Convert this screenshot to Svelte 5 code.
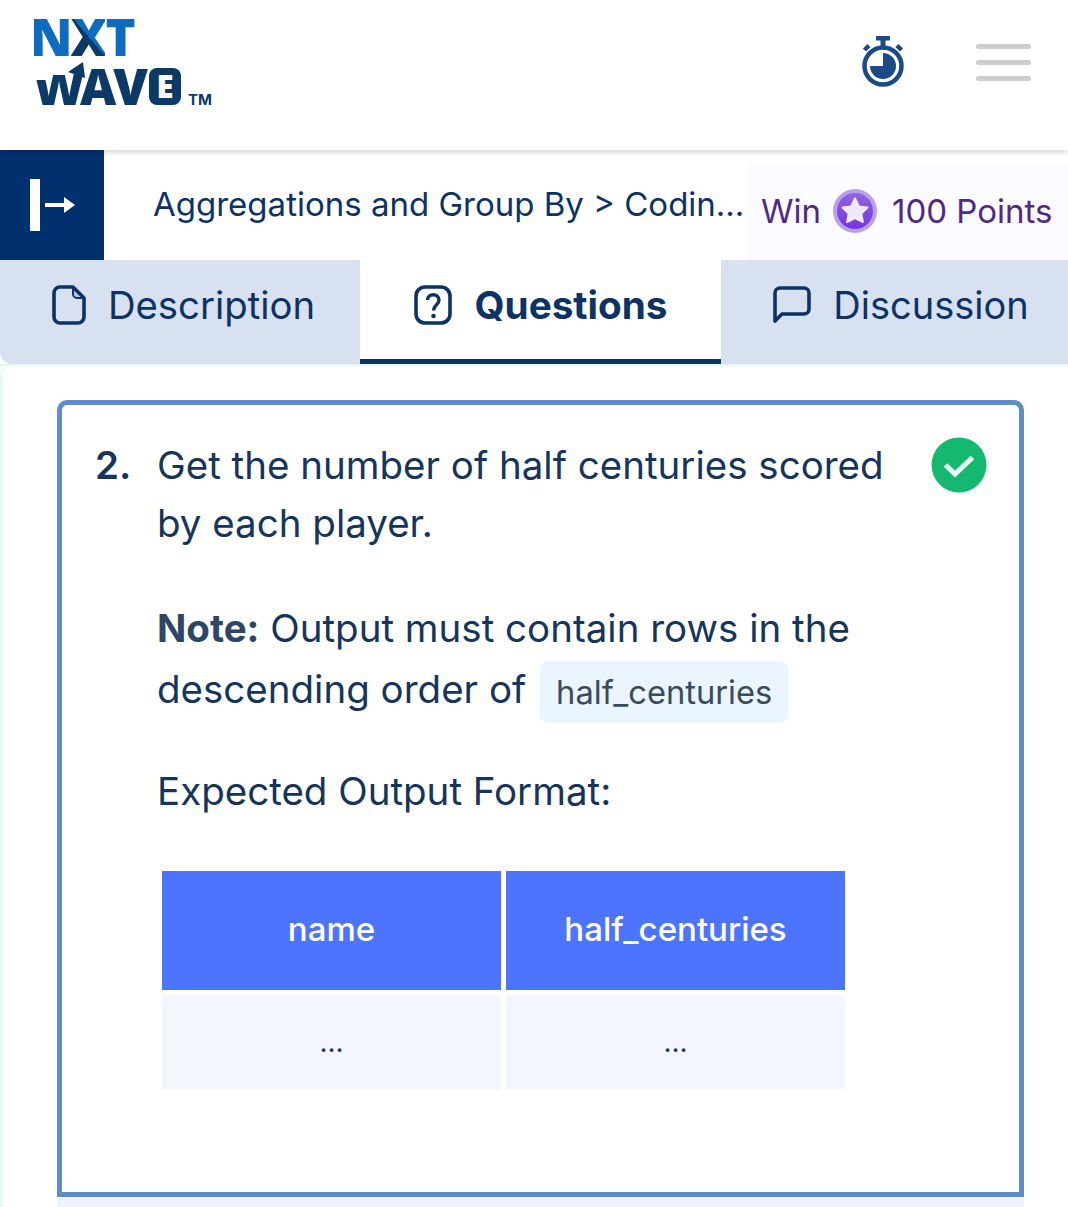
<script lang="ts">
  const columns = ["name", "half_centuries"];
</script>

<div class="page">
  <header class="topbar">
    <div class="logo">
      <div class="logo-nxt"><span>N</span><span class="x">X</span><span>T</span></div>
      <div class="logo-wave">
        <span class="w">W</span><span>AV</span><span class="e">E</span><span class="tm">TM</span>
        <svg class="wave-arrow" viewBox="0 0 62 50" aria-hidden="true">
          <rect x="0" y="4" width="21" height="14" fill="#fff" />
          <rect x="21" y="4" width="16" height="9" fill="#fff" />
          <path d="M37 10 L52 0 L54 16 Z" fill="#0c3a66" />
        </svg>
      </div>
    </div>
    <div class="top-actions">
      <svg class="timer" viewBox="0 0 44 52" aria-hidden="true">
        <rect x="15" y="0" width="14" height="4.5" fill="#1b4a87" />
        <rect x="19.500" y="3" width="5" height="7" fill="#1b4a87" />
        <path d="M3.500 14 L8 9.500 M40.500 14 L36 9.500" stroke="#1b4a87" stroke-width="4.500" />
        <circle cx="22" cy="30" r="18.500" fill="none" stroke="#1b4a87" stroke-width="4.500" />
        <path d="M22 17 A13 13 0 1 1 9 30 L22 30 Z" fill="#1b4a87" />
      </svg>
      <div class="burger"><i></i><i></i><i></i></div>
    </div>
  </header>

  <div class="crumb-row">
    <button class="toggle" aria-label="Open sidebar">
      <svg viewBox="0 0 46 54" width="46" height="54" aria-hidden="true">
        <rect x="0" y="1" width="10" height="52" fill="#fff" />
        <rect x="15" y="25" width="21" height="4" fill="#fff" />
        <path d="M34 19 L45 27 L34 35 Z" fill="#fff" />
      </svg>
    </button>
    <div class="crumb">Aggregations and Group By &gt; Coding Practice</div>
    <div class="win">
      <span>Win</span>
      <svg class="medal" viewBox="0 0 44 44" aria-hidden="true">
        <defs>
          <linearGradient id="medal-fill" x1="0" y1="0" x2="0" y2="1">
            <stop offset="0" stop-color="#8f66dc" />
            <stop offset="1" stop-color="#7433e6" />
          </linearGradient>
        </defs>
        <circle cx="22" cy="22" r="22" fill="#b9a0ea" />
        <circle cx="22" cy="22" r="18" fill="url(#medal-fill)" />
        <path d="M22 9.500 L26 17.500 L34.500 18.600 L28.300 24.600 L29.900 33 L22 29 L14.100 33 L15.700 24.600 L9.500 18.600 L18 17.500 Z" fill="#efe9fb" stroke="#efe9fb" stroke-width="2" stroke-linejoin="round" />
      </svg>
      <span>100 Points</span>
    </div>
  </div>

  <nav class="tabs">
    <div class="tab first">
      <svg viewBox="0 0 34 40" width="34" height="40" aria-hidden="true">
        <path d="M8 2 H21 L32 13 V32 A6 6 0 0 1 26 38 H8 A6 6 0 0 1 2 32 V8 A6 6 0 0 1 8 2 Z" fill="none" stroke="#0b3366" stroke-width="3.600" stroke-linejoin="round" />
        <path d="M21 3 L31 13 H25 A4 4 0 0 1 21 9 Z" fill="#b9c8df" stroke="#0b3366" stroke-width="2" stroke-linejoin="round" />
      </svg>
      <span>Description</span>
    </div>
    <div class="tab active">
      <svg viewBox="0 0 38 40" width="38" height="40" aria-hidden="true">
        <rect x="2" y="2" width="34" height="36" rx="9" fill="none" stroke="#0b3366" stroke-width="3.600" />
        <path d="M13.500 15 C13.500 8 25 8 25 15 C25 20 19.500 20 19.500 25.500" fill="none" stroke="#0b3366" stroke-width="3.400" />
        <circle cx="19.500" cy="31" r="2.300" fill="#0b3366" />
      </svg>
      <span>Questions</span>
    </div>
    <div class="tab last">
      <svg viewBox="0 0 38 38" width="38" height="38" aria-hidden="true">
        <path d="M2 35 V7 A5 5 0 0 1 7 2 H31 A5 5 0 0 1 36 7 V23 A5 5 0 0 1 31 28 H9 Z" fill="none" stroke="#0b3366" stroke-width="3.600" stroke-linejoin="round" />
      </svg>
      <span>Discussion</span>
    </div>
  </nav>

  <main class="content">
    <section class="card">
      <div class="question">
        <div class="number">2.</div>
        <div class="body">
          <p class="title">Get the number of half centuries scored by each player.</p>
          <p class="note"><strong>Note:</strong> Output must contain rows in the descending order of <code>half_centuries</code></p>
          <p class="format">Expected Output Format:</p>
          <table>
            <thead>
              <tr>
                {#each columns as column}
                  <th>{column}</th>
                {/each}
              </tr>
            </thead>
            <tbody>
              <tr>
                {#each columns as column}
                  <td>...</td>
                {/each}
              </tr>
            </tbody>
          </table>
        </div>
        <svg class="check" viewBox="0 0 56 56" aria-hidden="true">
          <circle cx="28" cy="28" r="27.500" fill="#14b86f" />
          <path d="M14.500 28 L24 37 L41.500 20.500" fill="none" stroke="#eafff6" stroke-width="5" />
        </svg>
      </div>
    </section>
    <div class="card-foot"></div>
  </main>
</div>

<style>
  :global(body) {
    margin: 0;
    background: #fff;
  }

  .page {
    width: 1068px;
    height: 1207px;
    overflow: hidden;
    font-family: Inter, "Liberation Sans", sans-serif;
    color: #0b3366;
  }

  .topbar {
    position: relative;
    z-index: 1;
    box-sizing: border-box;
    height: 150px;
    display: flex;
    justify-content: space-between;
    align-items: flex-start;
    padding: 16px 37px 0 33px;
    background: #fff;
    box-shadow: 0 3px 4px rgba(0, 0, 0, 0.13);
  }

  .logo {
    font-family: "Open Sans", Inter, sans-serif;
    font-weight: 800;
    line-height: 1;
  }

  .logo-nxt {
    display: flex;
    height: 40px;
    margin-left: -3px;
    font-size: 51px;
    line-height: 40px;
    letter-spacing: -2px;
    color: #0e6cc0;
  }

  .logo-nxt .x {
    background: linear-gradient(to top right, #0c3a66 50%, #0e6cc0 50%);
    -webkit-background-clip: text;
    background-clip: text;
    color: transparent;
  }

  .logo-wave {
    position: relative;
    display: flex;
    align-items: center;
    height: 40px;
    margin-top: 10px;
    margin-left: -2px;
    font-size: 50px;
    line-height: 40px;
    letter-spacing: -3px;
    color: #0c3a66;
  }

  .logo-wave .w {
    margin-left: 2px;
    letter-spacing: -5px;
  }

  .logo-wave .e {
    display: flex;
    align-items: center;
    justify-content: center;
    width: 32px;
    height: 37px;
    margin-left: 4px;
    border-radius: 8px;
    background: #0c3a66;
    color: #fff;
    font-size: 31px;
    letter-spacing: 0;
  }

  .logo-wave .tm {
    align-self: flex-end;
    margin-left: 7px;
    font-family: Inter, sans-serif;
    font-size: 15px;
    font-weight: 700;
    line-height: 15px;
    letter-spacing: 0;
    transform: translateY(1px);
  }

  .wave-arrow {
    position: absolute;
    left: 0;
    top: -4px;
    width: 62px;
    height: 50px;
  }

  .top-actions {
    display: flex;
    align-items: center;
    gap: 71px;
    padding-top: 20px;
  }

  .timer {
    width: 44px;
    height: 52px;
  }

  .burger {
    display: flex;
    flex-direction: column;
    gap: 11px;
    width: 55px;
  }

  .burger i {
    display: block;
    height: 5px;
    border-radius: 3px;
    background: #cdcdcd;
  }

  .crumb-row {
    display: flex;
    height: 110px;
  }

  .toggle {
    flex: none;
    width: 104px;
    height: 110px;
    display: flex;
    align-items: center;
    padding: 0 0 0 30px;
    border: 0;
    background: #00306e;
  }

  .crumb {
    flex: none;
    box-sizing: border-box;
    width: 643px;
    padding: 35px 0 0 49px;
    font-size: 33px;
    line-height: 38px;
    white-space: nowrap;
    overflow: hidden;
    text-overflow: ellipsis;
  }

  .win {
    flex: 1;
    display: flex;
    align-items: center;
    gap: 14px;
    margin-top: 14px;
    padding: 0 0 2px 14px;
    background: #fbfbff;
    color: #4f2a85;
    font-size: 33px;
  }

  .medal {
    flex: none;
    width: 44px;
    height: 44px;
    margin: 0 1px 0 -2px;
  }

  .tabs {
    display: grid;
    grid-template-columns: 360px 361px 347px;
    height: 104px;
    border-bottom: 2px solid #e3f6fb;
  }

  .tab {
    box-sizing: border-box;
    display: flex;
    align-items: center;
    justify-content: center;
    gap: 23px;
    padding-bottom: 14px;
    background: #d8e1ef;
    font-size: 38px;
  }

  .tab.first {
    padding-left: 7px;
    gap: 22px;
    font-size: 38.300px;
    border-bottom-left-radius: 12px;
  }

  .tab.active {
    background: #fff;
    border-bottom: 5px solid #0b3366;
    padding-bottom: 9px;
    font-size: 38.700px;
    font-weight: 700;
  }

  .tab.last {
    padding-left: 13px;
    gap: 22px;
  }

  .content {
    box-sizing: border-box;
    height: 841px;
    padding: 34px 44px 0 55px;
    border-left: 2px solid #e0f7fb;
    border-top-left-radius: 10px;
  }

  .card {
    box-sizing: border-box;
    height: 797px;
    padding: 31px 32px 0 33px;
    border: 5px solid #5f8cc4;
    border-radius: 10px 10px 0 0;
  }

  .card-foot {
    height: 10px;
    background: #eef3fd;
  }

  .question {
    display: flex;
    align-items: flex-start;
    color: #15355c;
    font-size: 38.500px;
  }

  .number {
    flex: none;
    width: 62px;
    font-weight: 600;
    line-height: 59px;
  }

  .body {
    flex: 1;
    min-width: 0;
  }

  .body p {
    margin: 0;
  }

  .title {
    width: 730px;
    line-height: 58px;
  }

  .note {
    width: 730px;
    margin-top: 46px !important;
    line-height: 61px;
  }

  .note strong {
    font-weight: 700;
    color: #2f4565;
  }

  .note code {
    display: inline-block;
    margin-top: 2px;
    margin-left: 3px;
    padding: 0 16px;
    border-radius: 8px;
    background: #eaf5fe;
    color: #3a4a5f;
    font-family: inherit;
    font-size: 32.700px;
    line-height: 62px;
    vertical-align: top;
  }

  .format {
    margin-top: 38px !important;
    line-height: 61px;
  }

  table {
    margin: 44px 0 0 0;
    border-collapse: separate;
    border-spacing: 5px;
  }

  th,
  td {
    width: 339px;
    padding: 0;
    text-align: center;
    font-size: 33px;
  }

  th {
    height: 119px;
    padding-bottom: 4px;
    box-sizing: border-box;
    background: #4d74ff;
    color: #fff;
    font-weight: 500;
  }

  td {
    height: 94px;
    background: #f3f6fe;
    color: #2a3f5f;
    font-size: 28px;
  }

  .check {
    flex: none;
    width: 56px;
    height: 56px;
    margin-left: -56px;
    margin-top: 1px;
  }
</style>
